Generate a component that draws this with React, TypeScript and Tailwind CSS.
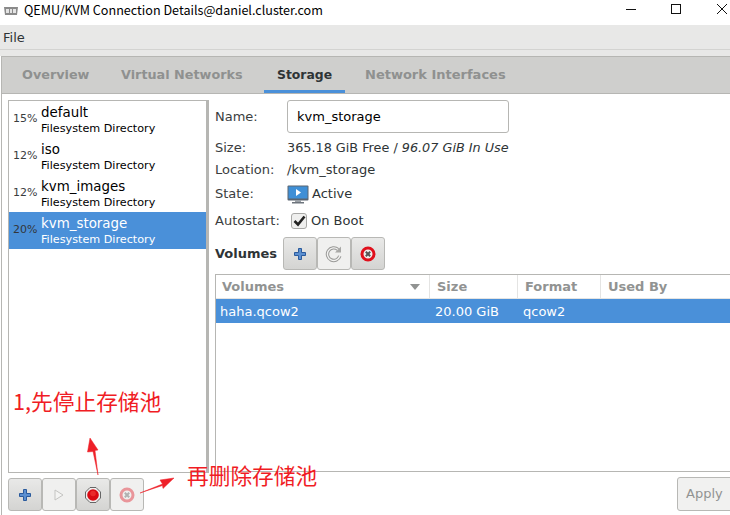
import React from "react";

const pools = [
  { pct: "15%", name: "default" },
  { pct: "12%", name: "iso" },
  { pct: "12%", name: "kvm_images" },
  { pct: "20%", name: "kvm_storage", selected: true },
];

const PlusIcon = () => (
  <svg width="14" height="14" viewBox="0 0 14 14">
    <path d="M5.500 1.500h3v4h4v3h-4v4h-3v-4h-4v-3h4z" fill="#5b8fd0" stroke="#2a5a9c" strokeWidth="1" strokeLinejoin="round" />
  </svg>
);

const DeleteIcon = ({ faded = false }: { faded?: boolean }) => (
  <svg width="18" height="18" viewBox="0 0 18 18" className={faded ? "opacity-40" : ""}>
    <circle cx="9" cy="9" r="6" fill="#f0f0f0" stroke="#e0101c" strokeWidth="3" />
    <path d="M6.800 6.800l4.400 4.400M11.200 6.800l-4.400 4.400" stroke="#555" strokeWidth="2" />
  </svg>
);

const RefreshIcon = () => (
  <svg width="18" height="18" viewBox="0 0 18 18" fill="none">
    <path d="M14.800 11a6.300 6.300 0 1 1-1.800-6.500" stroke="#989896" strokeWidth="3.400" />
    <path d="M14.800 11a6.300 6.300 0 1 1-1.800-6.500" stroke="#f2f2f1" strokeWidth="1.400" />
    <path d="M16 1.500v6h-6z" fill="#a8a8a6" />
  </svg>
);

const PlayIcon = () => (
  <svg width="12" height="14" viewBox="0 0 12 14" fill="#f4f4f3">
    <path d="M2 2l8 5-8 5z" stroke="#c4c4c2" strokeWidth="1" />
  </svg>
);

const StopIcon = () => (
  <svg width="16" height="16" viewBox="0 0 16 16">
    <path d="M5 .5h6L15.500 5v6L11 15.500H5L.5 11V5z" fill="#eee" stroke="#666" strokeWidth="1" />
    <circle cx="8" cy="8" r="5.800" fill="#d90a12" />
    <circle cx="8" cy="6.500" r="2.800" fill="#ea2a2a" />
  </svg>
);

const MonitorIcon = () => (
  <svg width="22" height="19" viewBox="0 0 22 19">
    <rect x="0.500" y="0.500" width="21" height="15" rx="1" fill="#5a6470" />
    <rect x="1.500" y="1.500" width="19" height="12" fill="#3f8fd6" />
    <path d="M9 4l5 3.500-5 3.500z" fill="#fff" />
    <rect x="8" y="15" width="6" height="2" fill="#9aa0a6" />
    <rect x="5" y="17" width="12" height="1.500" fill="#6d747c" />
  </svg>
);

const ToolButton = ({ children, disabled = false }: { children: React.ReactNode; disabled?: boolean }) => (
  <button
    type="button"
    className={`flex h-[33px] w-[34px] items-center justify-center rounded-[3px] border border-[#b8b8b5] ${
      disabled ? "bg-[#f0f0ef]" : "bg-gradient-to-b from-[#e9e9e8] to-[#d4d4d2]"
    }`}
  >
    {children}
  </button>
);

const Row = ({ label, children, className = "" }: { label: string; children: React.ReactNode; className?: string }) => (
  <div className={`flex items-center ${className}`}>
    <span className="w-[73px] shrink-0 text-[#3a3d3e]">{label}</span>
    {children}
  </div>
);

export default function App() {
  return (
    <div className="relative flex h-[515px] w-[730px] flex-col overflow-hidden bg-white font-['DejaVu_Sans',sans-serif] text-[13px] text-[#2e3436]">
      <div className="flex h-[25px] items-start bg-white pl-[3px] pt-[1px]">
        <svg width="16" height="10" viewBox="0 0 16 10" className="mr-[5px] mt-[5px]">
          <path d="M1 1h14l-1 8H2z" fill="#8a8a8a" />
          <path d="M3 3h3v4H3zM7 3h2v4H7zM10 3h3v4h-3z" fill="#e4e4e4" />
        </svg>
        <span className="font-['Noto_Sans_CJK_SC',sans-serif] text-[12.6px] leading-[18px] text-black">QEMU/KVM Connection Details@daniel.cluster.com</span>
        <div className="ml-auto mt-[2px] flex items-center">
          <svg width="12" height="12" viewBox="0 0 12 12" className="mr-[33px]">
            <path d="M1 6.500h10" stroke="#111" strokeWidth="1" />
          </svg>
          <svg width="12" height="12" viewBox="0 0 12 12" className="mr-[34px]">
            <rect x="1.500" y="1.500" width="9" height="9" fill="none" stroke="#111" strokeWidth="1" />
          </svg>
          <svg width="12" height="12" viewBox="0 0 12 12" className="mr-[2px]">
            <path d="M1 1l10 10M11 1L1 11" stroke="#111" strokeWidth="1" />
          </svg>
        </div>
      </div>

      <div className="flex h-[25px] items-center border-b border-[#d3d3d1] bg-[#e8e8e7] pl-[3px] pt-[1px] text-[#2e3436]">File</div>
      <div className="h-[6px] bg-[#e8e8e7]" />

      <div className="ml-px flex h-[38px] gap-[7px] border-y border-l border-[#b6b6b3] bg-[#cfcfcd] pl-[7px] font-bold">
        <span className="flex w-[92px] items-center pl-[13px] text-[12.8px] text-[#8f9190]">Overview</span>
        <span className="flex w-[149px] items-center pl-[13px] text-[12.8px] text-[#8f9190]">Virtual Networks</span>
        <span className="flex w-[81px] items-center border-b-[3px] border-[#4a90d9] pl-[13px] pt-[3px] text-[12.4px] text-[#2e3436]">Storage</span>
        <span className="flex items-center pl-[13px] text-[#8f9190]">Network Interfaces</span>
      </div>

      <div className="ml-px flex min-h-0 flex-1 border-l border-[#b6b6b3] pl-[6px] pt-[6px]">
        <div className="flex w-[207px] shrink-0 flex-col">
          <div className="h-[373px] w-[201px] border border-[#b6b6b3] border-r-[3px]">
            {pools.map((p) => (
              <div
                key={p.name}
                className={`flex h-[37px] items-center pl-[4px] ${p.selected ? "bg-[#4a90d9] text-white" : "text-black"}`}
              >
                <span className={`w-[28px] shrink-0 text-[11px] ${p.selected ? "text-[#33363a]" : "text-[#3a3d3e]"}`}>{p.pct}</span>
                <div className="flex flex-col pt-[1px]">
                  <span className="text-[13.400px] leading-[16px]">{p.name}</span>
                  <span className="text-[11.200px] leading-[15px]">Filesystem Directory</span>
                </div>
              </div>
            ))}
          </div>
          <div className="mt-[5px] flex">
            <ToolButton><PlusIcon /></ToolButton>
            <ToolButton disabled><PlayIcon /></ToolButton>
            <ToolButton><StopIcon /></ToolButton>
            <ToolButton disabled><DeleteIcon faded /></ToolButton>
          </div>
        </div>

        <div className="flex min-w-0 flex-1 flex-col">
          <Row label="Name:">
            <div className="-ml-px flex h-[33px] w-[222px] items-center rounded-[3px] border border-[#b6b6b3] pl-[9px] text-black">kvm_storage</div>
          </Row>
          <Row label="Size:" className="mt-[6px] h-[18px]">
            <span className="-ml-px text-[12.800px]">365.18 GiB Free / <i>96.07 GiB In Use</i></span>
          </Row>
          <Row label="Location:" className="mt-[4px] h-[18px]">
            <span className="-ml-px">/kvm_storage</span>
          </Row>
          <Row label="State:" className="mt-[4px] h-[22px]">
            <span className="-ml-[1px] flex"><MonitorIcon /></span>
            <span className="ml-[3px]">Active</span>
          </Row>
          <Row label="Autostart:" className="mt-[5px] h-[22px]">
            <span className="ml-[3px] flex h-[16px] w-[16px] items-center justify-center rounded-[3px] border border-[#a8a8a6] bg-[#efefee]">
              <svg width="13" height="12" viewBox="0 0 13 12" fill="none">
                <path d="M1.500 6l3.500 3.500 6.500-8" stroke="#222" strokeWidth="2.600" />
              </svg>
            </span>
            <span className="ml-[4px]">On Boot</span>
          </Row>
          <div className="mt-[5px] flex items-center">
            <span className="w-[68px] font-bold">Volumes</span>
            <ToolButton><PlusIcon /></ToolButton>
            <ToolButton disabled><RefreshIcon /></ToolButton>
            <ToolButton><DeleteIcon /></ToolButton>
          </div>

          <div className="mt-[4px] flex h-[198px] flex-col border-y border-l border-[#b6b6b3]">
            <div className="flex h-[24px] items-center border-b border-[#e4e4e3] font-bold text-[#919392]">
              <div className="flex h-full w-[214px] items-center justify-between border-r border-[#e4e4e3] pl-[6px] pr-[9px]">
                <span>Volumes</span>
                <svg width="10" height="6" viewBox="0 0 10 6"><path d="M0 0h10L5 6z" fill="#919392" /></svg>
              </div>
              <div className="flex h-full w-[88px] items-center border-r border-[#e4e4e3] pl-[7px]">Size</div>
              <div className="flex h-full w-[83px] items-center border-r border-[#e4e4e3] pl-[7px]">Format</div>
              <div className="pl-[7px]">Used By</div>
            </div>
            <div className="flex h-[24px] items-center bg-[#4a90d9] pt-[1px] text-white">
              <div className="w-[214px] pl-[4px]">haha.qcow2</div>
              <div className="w-[88px] pl-[5px]">20.00 GiB</div>
              <div className="pl-[5px]">qcow2</div>
            </div>
          </div>
          <div className="mt-[5px] flex justify-end">
            <button type="button" className="-mr-[8px] flex h-[34px] w-[61px] items-center rounded-[3px] border border-[#b8b8b5] bg-[#f1f1f0] pl-[8px] text-[#919392]">Apply</button>
          </div>
        </div>
      </div>

      {/* red annotations drawn over the screenshot */}
      <span className="absolute left-[13px] top-[386px] font-['Noto_Sans_CJK_SC',sans-serif] text-[21.700px] leading-[30px] text-[#f01c24]">1,先停止存储池</span>
      <span className="absolute left-[187px] top-[460px] font-['Noto_Sans_CJK_SC',sans-serif] text-[21.700px] leading-[30px] text-[#f01c24]">再删除存储池</span>
      <svg className="absolute left-0 top-0" width="730" height="515" viewBox="0 0 730 515" fill="none">
        <path d="M98 475L93 451.500L87.500 452L90 438L98 450L95 450.500z" fill="#ee2028" stroke="#ee2028" strokeWidth="0.500" />
        <path d="M140 493L162.500 484L160 480L174 478L163 488.500L162.500 485.500z" fill="#ee2028" stroke="#ee2028" strokeWidth="0.500" />
      </svg>
    </div>
  );
}
